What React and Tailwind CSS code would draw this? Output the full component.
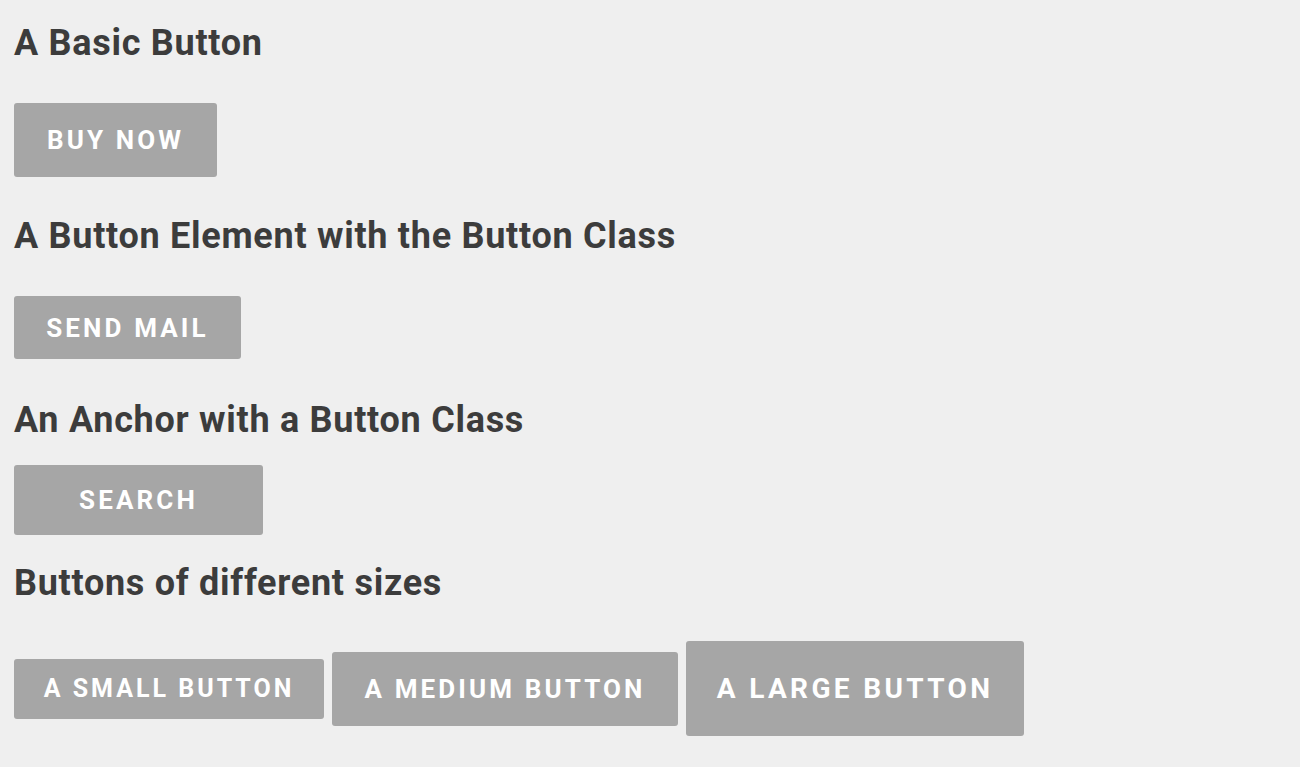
import React from 'react';

const Heading = ({ children, className = '' }) => (
  <h2 className={`text-[36px] font-bold leading-none tracking-[0.02em] text-[#3c3c3c] ${className}`}>{children}</h2>
);

const Btn = ({ children, className = '' }) => (
  <a
    href="#"
    className={`flex items-center justify-center rounded-[3px] bg-[#a6a6a6] font-bold uppercase text-white tracking-[0.12em] leading-none ${className}`}
  >
    {children}
  </a>
);

export default function App() {
  return (
    <div className="min-h-screen bg-[#efefef] px-[14px] pt-[25px] font-['Roboto',sans-serif]">
      <Heading>A Basic Button</Heading>
      <Btn className="mt-[42px] h-[74px] w-[203px] text-[26px]">Buy Now</Btn>

      <Heading className="mt-[41px]">A Button Element with the Button Class</Heading>
      <button className="mt-[42px] flex h-[63px] w-[227px] items-center justify-center rounded-[3px] bg-[#a6a6a6] text-[26px] font-bold uppercase leading-none tracking-[0.12em] text-white">
        Send Mail
      </button>

      <Heading className="mt-[43px]">An Anchor with a Button Class</Heading>
      <Btn className="mt-[27px] h-[70px] w-[249px] text-[26px]">Search</Btn>

      <Heading className="mt-[30px]">Buttons of different sizes</Heading>
      <div className="mt-[40px] flex items-center gap-[8px]">
        <Btn className="h-[60px] w-[310px] text-[25px]">A Small Button</Btn>
        <Btn className="h-[74px] w-[346px] text-[26px]">A Medium Button</Btn>
        <Btn className="h-[95px] w-[338px] text-[28px]">A Large Button</Btn>
      </div>
    </div>
  );
}
